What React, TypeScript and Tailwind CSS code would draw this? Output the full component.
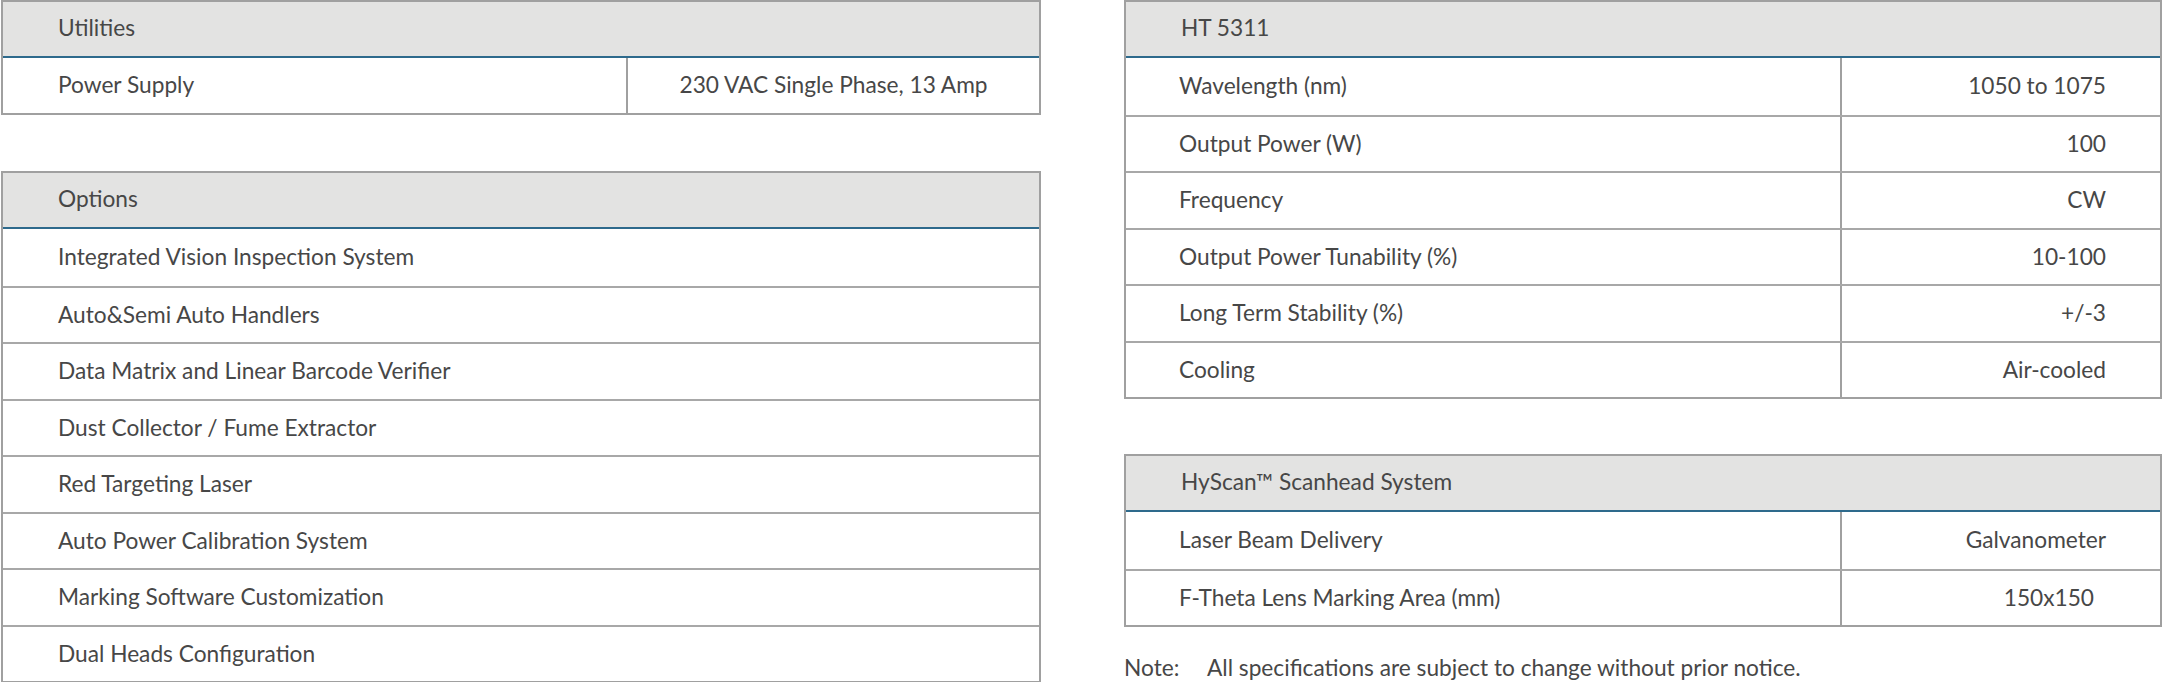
const font = { fontFamily: 'Lato, "Liberation Sans", sans-serif' };

interface SpecRow {
  label: string;
  value: string;
  pad?: string;
}

const laserRows: SpecRow[] = [
  { label: 'Wavelength (nm)', value: '1050 to 1075' },
  { label: 'Output Power (W)', value: '100' },
  { label: 'Frequency', value: 'CW' },
  { label: 'Output Power Tunability (%)', value: '10-100' },
  { label: 'Long Term Stability (%)', value: '+/-3' },
  { label: 'Cooling', value: 'Air-cooled' },
];

const scanRows: SpecRow[] = [
  { label: 'Laser Beam Delivery', value: 'Galvanometer' },
  { label: 'F-Theta Lens Marking Area (mm)', value: '150x150', pad: 'pr-[66px]' },
];

const options = [
  'Integrated Vision Inspection System',
  'Auto&Semi Auto Handlers',
  'Data Matrix and Linear Barcode Verifier',
  'Dust Collector / Fume Extractor',
  'Red Targeting Laser',
  'Auto Power Calibration System',
  'Marking Software Customization',
  'Dual Heads Configuration',
];

function Header({ title }: { title: React.ReactNode }) {
  return (
    <div className="h-[56px] flex items-center pl-[55px] pb-[2px] bg-[#e3e3e2] border-b-2 border-[#2e6a8c]">
      {title}
    </div>
  );
}

function SpecTable({ title, rows }: { title: React.ReactNode; rows: SpecRow[] }) {
  return (
    <div className="border-2 border-[#a0a0a0]">
      <Header title={title} />
      {rows.map((row, i) => (
        <div
          key={row.label}
          className={`h-[56.5px] flex ${i > 0 ? 'border-t-2 border-[#a8a8a8]' : ''}`}
        >
          <div className="w-[716px] flex items-center pl-[53px] border-r-2 border-[#a0a0a0]">
            {row.label}
          </div>
          <div className={`flex-1 flex items-center justify-end ${row.pad ?? 'pr-[54px]'}`}>
            {row.value}
          </div>
        </div>
      ))}
    </div>
  );
}

export default function App() {
  return (
    <div
      className="w-[2163px] h-[682px] bg-white text-[#474747] text-[22.7px] font-normal flex pl-px"
      style={font}
    >
      {/* Left column */}
      <div className="w-[1040px] flex flex-col">
        <div className="border-2 border-[#a0a0a0]">
          <Header title="Utilities" />
          <div className="h-[55px] flex">
            <div className="w-[625px] flex items-center pl-[55px] border-r-2 border-[#a0a0a0]">
              Power Supply
            </div>
            <div className="flex-1 flex items-center justify-center">230 VAC Single Phase, 13 Amp</div>
          </div>
        </div>

        <div className="mt-[56px] border-2 border-[#a0a0a0]">
          <Header title="Options" />
          {options.map((opt, i) => (
            <div
              key={opt}
              className={`h-[56.5px] flex items-center pl-[55px] ${i > 0 ? 'border-t-2 border-[#a8a8a8]' : ''}`}
            >
              {opt}
            </div>
          ))}
        </div>
      </div>

      {/* Right column */}
      <div className="ml-[83px] w-[1038px] flex flex-col">
        <SpecTable title="HT 5311" rows={laserRows} />
        <div className="mt-[55px]">
          <SpecTable title="HyScan™ Scanhead System" rows={scanRows} />
        </div>
        <div className="mt-[24px] flex">
          <span className="w-[83px]">Note:</span>
          <span>All specifications are subject to change without prior notice.</span>
        </div>
      </div>
    </div>
  );
}
